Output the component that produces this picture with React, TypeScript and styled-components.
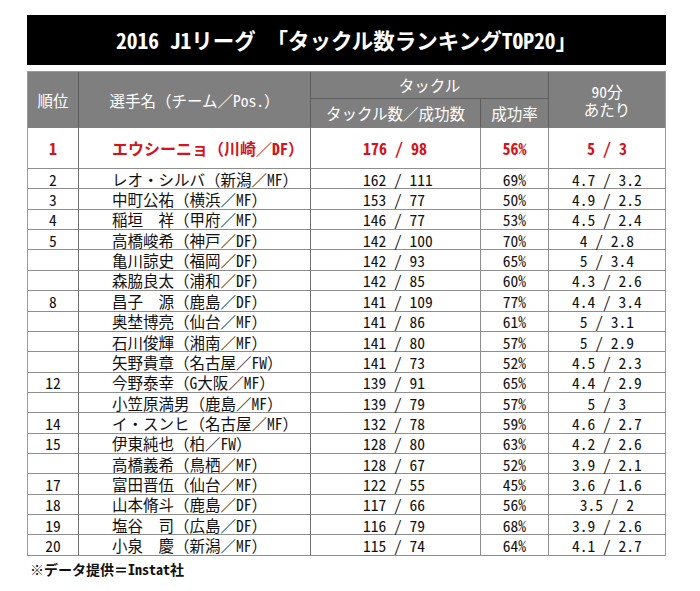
import React from "react";
import styled, { createGlobalStyle, css } from "styled-components";

const GlobalStyle = createGlobalStyle`
  html, body {
    margin: 0;
    padding: 0;
    background: #ffffff;
  }
  body {
    font-family: "Noto Sans CJK JP", "Noto Sans", sans-serif;
    color: #111111;
  }
`;

const Half = styled.span`
  font-feature-settings: "hwid" 1;
`;

function Mixed({ text }: { text: string }) {
  const parts = text.split(/([\x20-\x7E]+)/).filter((s) => s.length > 0);
  return (
    <>
      {parts.map((p, i) =>
        /^[\x20-\x7E]+$/.test(p) ? <Half key={i}>{p}</Half> : <React.Fragment key={i}>{p}</React.Fragment>
      )}
    </>
  );
}

const Page = styled.div`
  padding: 15px 0 0 27px;
  width: 639px;
`;

const TitleBar = styled.h1`
  margin: 0;
  height: 50px;
  background: #000000;
  color: #ffffff;
  font-size: 21.5px;
  font-weight: 700;
  display: flex;
  align-items: center;
  justify-content: center;
  line-height: 26px;
  white-space: pre;
`;

const Table = styled.div`
  margin-top: 6px;
  display: grid;
  grid-template-columns: 51px 232px 170px 68px 116px;
  grid-template-rows: 27px 29px 41px repeat(19, 20.368px);
  border: 1px solid #9a9a9a;
  border-bottom: none;
  width: 637px;
`;

const HeadCell = styled.div<{ $col: string; $row: string; $noRight?: boolean; $split?: boolean }>`
  grid-column: ${(p) => p.$col};
  grid-row: ${(p) => p.$row};
  background: #7f7f7f;
  color: #ffffff;
  font-size: 15.5px;
  line-height: 18px;
  display: flex;
  flex-direction: column;
  align-items: center;
  justify-content: center;
  text-align: center;
  box-sizing: border-box;
  white-space: pre;
  border-right: ${(p) => (p.$noRight ? "none" : "1px solid #5e5e5e")};
  border-bottom: ${(p) => (p.$split ? "1px solid #5e5e5e" : "1px solid #7f7f7f")};
`;

const Cell = styled.div<{ $hl?: boolean; $align: "center" | "left"; $pad?: number; $noRight?: boolean; $dark?: boolean }>`
  box-sizing: border-box;
  display: flex;
  align-items: center;
  justify-content: ${(p) => (p.$align === "center" ? "center" : "flex-start")};
  padding-left: ${(p) => (p.$pad ? `${p.$pad}px` : "0")};
  border-right: ${(p) => (p.$noRight ? "none" : `1px solid ${p.$dark ? "#6f6f6f" : "#8e8e8e"}`)};
  border-bottom: 1px solid #8e8e8e;
  font-size: 15.5px;
  line-height: 18px;
  white-space: pre;
  ${(p) =>
    p.$hl &&
    css`
      color: #d3141c;
      font-weight: 700;
      font-size: 16px;
    `}
`;

const Footer = styled.p`
  margin: 4px 0 0 3px;
  font-size: 14px;
  font-weight: 700;
  line-height: 18px;
  color: #111111;
  white-space: pre;
`;

type Row = [string, string, string, string, string];

const rows: Row[] = [
  ["1", "エウシーニョ（川崎／DF）", "176 / 98", "56%", "5 / 3"],
  ["2", "レオ・シルバ（新潟／MF）", "162 / 111", "69%", "4.7 / 3.2"],
  ["3", "中町公祐（横浜／MF）", "153 / 77", "50%", "4.9 / 2.5"],
  ["4", "稲垣　祥（甲府／MF）", "146 / 77", "53%", "4.5 / 2.4"],
  ["5", "高橋峻希（神戸／DF）", "142 / 100", "70%", "4 / 2.8"],
  ["", "亀川諒史（福岡／DF）", "142 / 93", "65%", "5 / 3.4"],
  ["", "森脇良太（浦和／DF）", "142 / 85", "60%", "4.3 / 2.6"],
  ["8", "昌子　源（鹿島／DF）", "141 / 109", "77%", "4.4 / 3.4"],
  ["", "奥埜博亮（仙台／MF）", "141 / 86", "61%", "5 / 3.1"],
  ["", "石川俊輝（湘南／MF）", "141 / 80", "57%", "5 / 2.9"],
  ["", "矢野貴章（名古屋／FW）", "141 / 73", "52%", "4.5 / 2.3"],
  ["12", "今野泰幸（G大阪／MF）", "139 / 91", "65%", "4.4 / 2.9"],
  ["", "小笠原満男（鹿島／MF）", "139 / 79", "57%", "5 / 3"],
  ["14", "イ・スンヒ（名古屋／MF）", "132 / 78", "59%", "4.6 / 2.7"],
  ["15", "伊東純也（柏／FW）", "128 / 80", "63%", "4.2 / 2.6"],
  ["", "高橋義希（鳥栖／MF）", "128 / 67", "52%", "3.9 / 2.1"],
  ["17", "富田晋伍（仙台／MF）", "122 / 55", "45%", "3.6 / 1.6"],
  ["18", "山本脩斗（鹿島／DF）", "117 / 66", "56%", "3.5 / 2"],
  ["19", "塩谷　司（広島／DF）", "116 / 79", "68%", "3.9 / 2.6"],
  ["20", "小泉　慶（新潟／MF）", "115 / 74", "64%", "4.1 / 2.7"],
];

export default function App() {
  return (
    <>
      <GlobalStyle />
      <Page>
        <TitleBar>
          <Mixed text="2016 J1リーグ　「タックル数ランキングTOP20」" />
        </TitleBar>
        <Table>
          <HeadCell $col="1" $row="1 / span 2">順位</HeadCell>
          <HeadCell $col="2" $row="1 / span 2">
            <span>
              <Mixed text="選手名（チーム／Pos.）" />
            </span>
          </HeadCell>
          <HeadCell $col="3 / span 2" $row="1" $split>タックル</HeadCell>
          <HeadCell $col="5" $row="1 / span 2" $noRight>
            <span>
              <Mixed text="90" />分
            </span>
            <span>あたり</span>
          </HeadCell>
          <HeadCell $col="3" $row="2">タックル数／成功数</HeadCell>
          <HeadCell $col="4" $row="2">成功率</HeadCell>
          {rows.map((r, i) => {
            const hl = i === 0;
            return (
              <React.Fragment key={i}>
                <Cell $hl={hl} $align="center" $dark>
                  <Mixed text={r[0]} />
                </Cell>
                <Cell $hl={hl} $align="left" $pad={33} $dark>
                  <span>
                    <Mixed text={r[1]} />
                  </span>
                </Cell>
                <Cell $hl={hl} $align="left" $pad={52}>
                  <Mixed text={r[2]} />
                </Cell>
                <Cell $hl={hl} $align="center">
                  <Mixed text={r[3]} />
                </Cell>
                <Cell $hl={hl} $align="center" $noRight>
                  <Mixed text={r[4]} />
                </Cell>
              </React.Fragment>
            );
          })}
        </Table>
        <Footer>
          <Mixed text="※データ提供＝Instat社" />
        </Footer>
      </Page>
    </>
  );
}
